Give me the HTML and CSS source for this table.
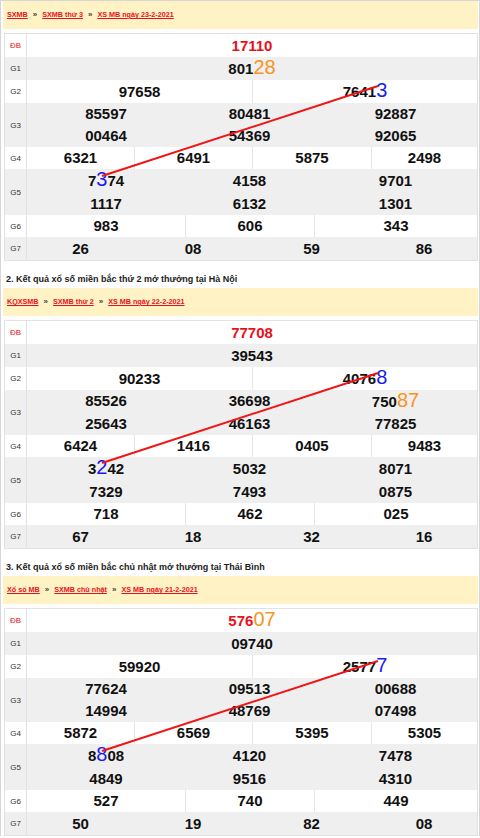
FILE: index.html
```html
<!DOCTYPE html>
<html>
<head>
    <meta charset="UTF-8">
    <title>XSMB</title>
    <link rel="stylesheet" href="styles.css">
</head>
<body>
<div class="page">

    <div class="crumbs">
        <a href="#">SXMB</a><span class="sep">»</span><a href="#">SXMB thứ 3</a><span class="sep">»</span><a href="#">XS MB ngày 23-2-2021</a>
    </div>
    <div class="kq">
        <div class="r"><div class="lbl db">ĐB</div><div class="v one db"><div>17110</div></div></div>
        <div class="r alt"><div class="lbl">G1</div><div class="v one"><div>801<span class="o">28</span></div></div></div>
        <div class="r"><div class="lbl">G2</div><div class="v c2 lines"><div>97658</div><div>7641<span class="b">3</span></div></div></div>
        <div class="r alt"><div class="lbl">G3</div><div class="v c3 tight"><div>85597</div><div>80481</div><div>92887</div><div>00464</div><div>54369</div><div>92065</div></div></div>
        <div class="r"><div class="lbl">G4</div><div class="v c4 lines tight"><div>6321</div><div>6491</div><div>5875</div><div>2498</div></div></div>
        <div class="r alt"><div class="lbl">G5</div><div class="v c3"><div>7<span class="b">3</span>74</div><div>4158</div><div>9701</div><div>1117</div><div>6132</div><div>1301</div></div></div>
        <div class="r"><div class="lbl">G6</div><div class="v c3 lines tight"><div>983</div><div>606</div><div>343</div></div></div>
        <div class="r alt"><div class="lbl">G7</div><div class="v c4"><div>26</div><div>08</div><div>59</div><div>86</div></div></div>
        <svg class="trace" width="475" height="228"><line x1="97" y1="142" x2="373" y2="52"/></svg>
    </div>

    <h2 class="title">2. Kết quả xổ số miền bắc thứ 2 mở thưởng tại Hà Nội</h2>
    <div class="crumbs">
        <a href="#">KQXSMB</a><span class="sep">»</span><a href="#">SXMB thứ 2</a><span class="sep">»</span><a href="#">XS MB ngày 22-2-2021</a>
    </div>
    <div class="kq">
        <div class="r"><div class="lbl db">ĐB</div><div class="v one db"><div>77708</div></div></div>
        <div class="r alt"><div class="lbl">G1</div><div class="v one"><div>39543</div></div></div>
        <div class="r"><div class="lbl">G2</div><div class="v c2 lines"><div>90233</div><div>4076<span class="b">8</span></div></div></div>
        <div class="r alt"><div class="lbl">G3</div><div class="v c3 tight"><div>85526</div><div>36698</div><div>750<span class="o">87</span></div><div>25643</div><div>46163</div><div>77825</div></div></div>
        <div class="r"><div class="lbl">G4</div><div class="v c4 lines tight"><div>6424</div><div>1416</div><div>0405</div><div>9483</div></div></div>
        <div class="r alt"><div class="lbl">G5</div><div class="v c3"><div>3<span class="b">2</span>42</div><div>5032</div><div>8071</div><div>7329</div><div>7493</div><div>0875</div></div></div>
        <div class="r"><div class="lbl">G6</div><div class="v c3 lines tight"><div>718</div><div>462</div><div>025</div></div></div>
        <div class="r alt"><div class="lbl">G7</div><div class="v c4"><div>67</div><div>18</div><div>32</div><div>16</div></div></div>
        <svg class="trace" width="475" height="228"><line x1="97" y1="142" x2="373" y2="52"/></svg>
    </div>

    <h2 class="title">3. Kết quả xổ số miền bắc chủ nhật mở thưởng tại Thái Bình</h2>
    <div class="crumbs">
        <a href="#">Xổ số MB</a><span class="sep">»</span><a href="#">SXMB chủ nhật</a><span class="sep">»</span><a href="#">XS MB ngày 21-2-2021</a>
    </div>
    <div class="kq">
        <div class="r"><div class="lbl db">ĐB</div><div class="v one db"><div>576<span class="o">07</span></div></div></div>
        <div class="r alt"><div class="lbl">G1</div><div class="v one"><div>09740</div></div></div>
        <div class="r"><div class="lbl">G2</div><div class="v c2 lines"><div>59920</div><div>2577<span class="b">7</span></div></div></div>
        <div class="r alt"><div class="lbl">G3</div><div class="v c3 tight"><div>77624</div><div>09513</div><div>00688</div><div>14994</div><div>48769</div><div>07498</div></div></div>
        <div class="r"><div class="lbl">G4</div><div class="v c4 lines tight"><div>5872</div><div>6569</div><div>5395</div><div>5305</div></div></div>
        <div class="r alt"><div class="lbl">G5</div><div class="v c3"><div>8<span class="b">8</span>08</div><div>4120</div><div>7478</div><div>4849</div><div>9516</div><div>4310</div></div></div>
        <div class="r"><div class="lbl">G6</div><div class="v c3 lines tight"><div>527</div><div>740</div><div>449</div></div></div>
        <div class="r alt"><div class="lbl">G7</div><div class="v c4"><div>50</div><div>19</div><div>82</div><div>08</div></div></div>
        <svg class="trace" width="475" height="228"><line x1="97" y1="142" x2="373" y2="52"/></svg>
    </div>

</div>
</body>
</html>
```

FILE: styles.css
```css
body {
    margin: 0;
    font-family: "Liberation Sans", Arial, sans-serif;
    background-color: #fff;
}

.page {
    width: 480px;
    box-sizing: border-box;
    border-top: 1px solid #d6d6d6;
    border-left: 1px solid #d6d6d6;
    border-right: 1px solid #d6d6d6;
    padding: 0 1px 0 2px;
}

/* breadcrumb bar */
.crumbs {
    height: 28px;
    line-height: 28px;
    padding-left: 4px;
    background-color: #fff2c4;
    font-size: 7.2px;
    font-weight: bold;
}

.crumbs a {
    color: #e8111b;
    text-decoration: underline;
}

.crumbs .sep {
    margin: 0 5px;
    color: #444;
    font-size: 8px;
}

.title {
    margin: 0;
    padding: 9px 0 0 3px;
    font-size: 9px;
    line-height: 18px;
    font-weight: bold;
    color: #222;
}

/* result table */
.kq {
    position: relative;
    margin: 4px 0 0 1px;
    border: 1px solid #e2e2e2;
}

.r {
    display: grid;
    grid-template-columns: 22px 1fr;
    background-color: #fff;
}

.r.alt {
    background-color: #efefef;
}

.lbl {
    display: flex;
    align-items: center;
    justify-content: center;
    font-size: 8px;
    color: #333;
    border-right: 1px solid #e2e2e2;
}

.lbl.db {
    color: #e8111b;
}

.v {
    display: grid;
    font-size: 15px;
    font-weight: bold;
    line-height: 23px;
    color: #111;
    text-align: center;
}

.v.tight {
    line-height: 22px;
}

.v.db {
    color: #e8111b;
}

.c2 {
    grid-template-columns: 225px 1fr;
}

.c3 {
    grid-template-columns: 158px 129px 1fr;
}

.c4 {
    grid-template-columns: 107px 118px 119px 1fr;
}

.lines > div + div {
    border-left: 1px solid #e6e6e6;
}

.o,
.b {
    font-size: 20px;
    font-weight: normal;
    line-height: 1;
}

.o {
    color: #f7941d;
}

.b {
    color: #1b1bf0;
}

/* loto trace over the table */
.trace {
    position: absolute;
    left: 0;
    top: 0;
    pointer-events: none;
}

.trace line {
    stroke: #f01414;
    stroke-width: 2;
}
```
